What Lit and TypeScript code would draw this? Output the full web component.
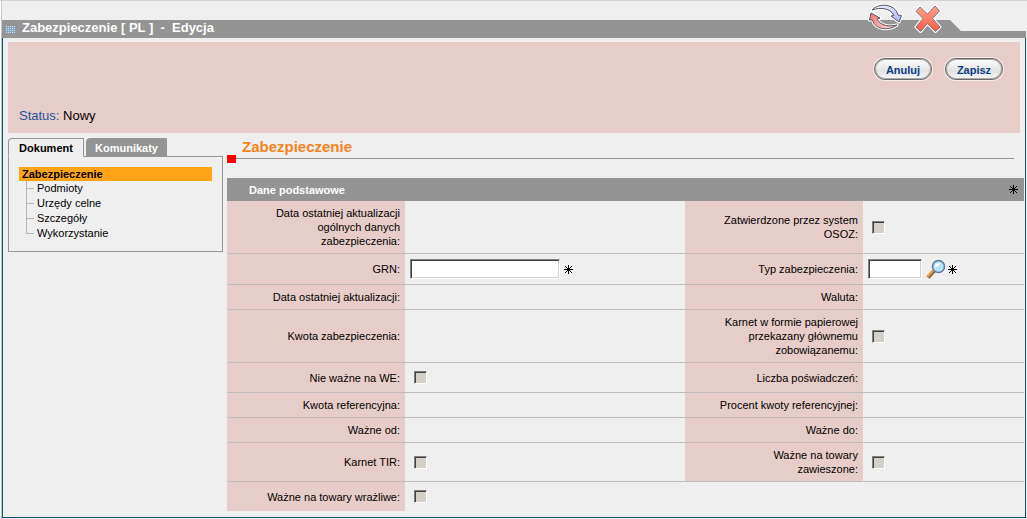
import { LitElement, html, css, svg, nothing } from "lit";
import { customElement } from "lit/decorators.js";

type Kind = "none" | "check" | "text" | "lookup";

interface Field {
  id: string;
  label: string;
  kind: Kind;
}

interface Row {
  size: string;
  left: Field;
  right?: Field;
}

const ROWS: Row[] = [
  {
    size: "h52",
    left: { id: "update-general", label: "Data ostatniej aktualizacji ogólnych danych zabezpieczenia:", kind: "none" },
    right: { id: "osoz", label: "Zatwierdzone przez system OSOZ:", kind: "check" },
  },
  {
    size: "h30",
    left: { id: "grn", label: "GRN:", kind: "text" },
    right: { id: "type", label: "Typ zabezpieczenia:", kind: "lookup" },
  },
  {
    size: "h24",
    left: { id: "update", label: "Data ostatniej aktualizacji:", kind: "none" },
    right: { id: "currency", label: "Waluta:", kind: "none" },
  },
  {
    size: "h52",
    left: { id: "amount", label: "Kwota zabezpieczenia:", kind: "none" },
    right: { id: "paper", label: "Karnet w formie papierowej przekazany głównemu zobowiązanemu:", kind: "check" },
  },
  {
    size: "h29",
    left: { id: "not-we", label: "Nie ważne na WE:", kind: "check" },
    right: { id: "certs", label: "Liczba poświadczeń:", kind: "none" },
  },
  {
    size: "h24",
    left: { id: "ref", label: "Kwota referencyjna:", kind: "none" },
    right: { id: "percent", label: "Procent kwoty referencyjnej:", kind: "none" },
  },
  {
    size: "h24",
    left: { id: "from", label: "Ważne od:", kind: "none" },
    right: { id: "to", label: "Ważne do:", kind: "none" },
  },
  {
    size: "h38",
    left: { id: "tir", label: "Karnet TIR:", kind: "check" },
    right: { id: "suspended", label: "Ważne na towary zawieszone:", kind: "check" },
  },
  {
    size: "h29",
    left: { id: "sensitive", label: "Ważne na towary wrażliwe:", kind: "check" },
  },
];

const star = html`<svg class="star" width="9" height="9" viewBox="0 0 9 9" role="img" aria-label="wymagane">
  <path d="M4.5 0V9M0 4.5H9M1 1L8 8M8 1L1 8" stroke="#000" fill="none" />
</svg>`;

const BLUE = "M5 7C11 0 28 0 31 12L34.500 12.500L32 19L24 13L27 12.500C23 5 14 4 5 7Z";
const RED = "M30 22C22 28 8 27 5.500 17L2.500 17L4 10L13 15L10 16C14 23 22 24 30 22Z";

const refreshIcon = html`<svg width="36" height="28" viewBox="0 0 36 28" aria-hidden="true">
  <defs>
    <linearGradient id="blue" x1="0" y1="0" x2="1" y2="1">
      <stop offset="0" stop-color="#f6f7ff" />
      <stop offset="1" stop-color="#a9b8f6" />
    </linearGradient>
    <linearGradient id="red" x1="0" y1="0" x2="1" y2="1">
      <stop offset="0" stop-color="#f4706c" />
      <stop offset="1" stop-color="#fbdcdc" />
    </linearGradient>
  </defs>
  <g stroke="#fff" stroke-width="3" stroke-linejoin="round" fill="#fff">
    <path d=${BLUE} />
    <path d=${RED} />
  </g>
  <g stroke="#55555f" stroke-width="1" stroke-linejoin="round">
    <path d=${BLUE} fill="url(#blue)" />
    <path d=${RED} fill="url(#red)" />
  </g>
</svg>`;

const CROSS = "M6 4L13.500 11L21 3L25.500 8L18.500 15.500L26 24L21.500 28.500L13.500 20.500L6.500 28.500L2 24L9 15.500L2 8.500Z";

const closeIcon = html`<svg width="28" height="31" viewBox="0 0 28 31" aria-hidden="true">
  <defs>
    <linearGradient id="cross" x1="0" y1="0" x2="0" y2="1">
      <stop offset="0" stop-color="#ffa592" />
      <stop offset="1" stop-color="#f85a42" />
    </linearGradient>
  </defs>
  <path d=${CROSS} stroke="#fff" stroke-width="3" stroke-linejoin="round" />
  <path d=${CROSS} fill="url(#cross)" stroke="#85706d" stroke-linejoin="round" />
</svg>`;

const lensIcon = html`<svg width="20" height="20" viewBox="0 0 20 20" aria-hidden="true">
  <path d="M2 18.500L8 12" stroke="#8a6540" stroke-width="4" />
  <path d="M1 18L7 11.500" stroke="#f0a040" stroke-width="2" />
  <circle cx="12.500" cy="7.500" r="6" fill="#b8e2fa" stroke="#5b78a0" stroke-width="1.500" />
  <path d="M9 8C9 5 11 4 14 4C13 7 12 8 9 8Z" fill="#fff" />
</svg>`;

@customElement("app-root")
export class AppRoot extends LitElement {
  static styles = css`
    :host {
      min-height: 100vh;
      box-sizing: border-box;
      padding: 0 1px 1px 2px;
      background: linear-gradient(90deg, #fff 1px, #c8c8c8 1px, #c8c8c8 2px, #efefef 2px);
      border-top: 1px solid #d4d4d4;
      font: 11px/14px "Liberation Sans", Arial, sans-serif;
      color: #000;
      display: flex;
      flex-direction: column;
    }
    button {
      font: inherit;
      cursor: pointer;
    }
    .titlebar {
      display: flex;
      align-items: flex-end;
      height: 37px;
    }
    .caption {
      flex: 1;
      display: flex;
      align-items: center;
      gap: 7px;
      height: 18px;
      padding: 0 0 0 4px;
      background: #949494;
    }
    .caption h1 {
      margin: 0;
      font-size: 13px;
      line-height: 15px;
      color: #fff;
      white-space: pre;
      padding-bottom: 3px;
    }
    .tools {
      display: flex;
      gap: 11px;
      align-self: stretch;
      align-items: flex-start;
      padding-top: 2px;
      background: linear-gradient(#efefef 19px, #949494 19px);
    }
    .tool {
      border: 0;
      padding: 0;
      background: none;
      display: block;
    }
    .tool svg {
      display: block;
    }
    .slope {
      width: 84px;
      height: 18px;
      background: #949494;
      clip-path: polygon(0 0, 8px 0, 19px 11px, 100% 11px, 100% 100%, 0 100%);
    }
    .frame {
      flex: 1;
      border: 1px solid #005566;
      border-top: 0;
      padding: 4px 1px 6px 5px;
      background: #efefef;
    }
    .status {
      display: flex;
      flex-direction: column;
      justify-content: space-between;
      box-sizing: border-box;
      min-height: 91px;
      margin-right: 4px;
      padding: 16px 17px 9px 11px;
      background: #e6cdc9;
      font-size: 13px;
      line-height: 16px;
    }
    .actions {
      display: flex;
      justify-content: flex-end;
      gap: 13px;
    }
    .pill {
      box-sizing: border-box;
      height: 22px;
      min-width: 58px;
      padding: 1px 10px 0;
      border: 1px solid #6a6a6a;
      border-radius: 11px;
      background: linear-gradient(#fff, #e2e2e2 60%, #f8f8f8);
      box-shadow: inset 0 0 0 1px #a8a8a8, 0 0 0 1px #f6eeec;
      color: #0b4084;
      font-size: 11px;
      font-weight: bold;
    }
    .status p {
      margin: 0;
    }
    .status span {
      color: #1f5299;
    }
    .body {
      display: flex;
      align-items: flex-start;
      gap: 4px;
      padding-top: 5px;
    }
    .side {
      width: 215px;
      flex: none;
    }
    .tabs {
      display: flex;
      gap: 2px;
      position: relative;
      margin-bottom: -1px;
    }
    .tab {
      box-sizing: border-box;
      height: 19px;
      min-width: 76px;
      padding: 1px 8px 0;
      border: 1px solid #949494;
      border-radius: 4px 0 0 0;
      background: #949494;
      color: #fff;
      font-weight: bold;
    }
    .tab.active {
      background: #efefef;
      border-bottom-color: #efefef;
      color: #000;
    }
    .tree {
      border: 1px solid #949494;
      padding: 10px;
    }
    .current {
      display: block;
      background: #ffa419;
      padding: 0 3px;
      font-weight: bold;
      color: #000;
      text-decoration: none;
    }
    .tree ul {
      list-style: none;
      margin: 0;
      padding: 0 0 0 7px;
    }
    .tree li {
      height: 15px;
      line-height: 15px;
      display: flex;
      background: linear-gradient(#b5b5b5, #b5b5b5) 0 0 / 1px 100% no-repeat,
        linear-gradient(#b5b5b5, #b5b5b5) 0 7px / 8px 1px no-repeat;
      padding-left: 11px;
    }
    .tree li:last-child {
      background: linear-gradient(#b5b5b5, #b5b5b5) 0 0 / 1px 8px no-repeat,
        linear-gradient(#b5b5b5, #b5b5b5) 0 7px / 8px 1px no-repeat;
    }
    .tree li a {
      color: #000;
      text-decoration: none;
    }
    .main {
      flex: 1;
      min-width: 0;
    }
    .heading {
      display: grid;
      grid-template-columns: 9px 1fr;
      margin-right: 10px;
    }
    .heading h2 {
      grid-column: 1 / -1;
      margin: 0;
      padding: 0 0 0 15px;
      font-size: 15px;
      line-height: 17px;
      color: #f58220;
    }
    .marker {
      height: 8px;
      background: #f00;
    }
    .rule {
      height: 3px;
      border-bottom: 1px solid #949494;
    }
    table {
      width: 100%;
      margin-top: 15px;
      border-spacing: 0;
      table-layout: fixed;
    }
    .c1,
    .c3 {
      width: 178px;
    }
    .c4 {
      width: 161px;
    }
    td,
    th {
      padding: 0;
    }
    thead th {
      background: #949494;
      color: #fff;
      text-align: left;
      height: 23px;
    }
    .section {
      display: flex;
      align-items: center;
      justify-content: space-between;
      padding: 0 6px 0 22px;
    }
    tbody tr + tr > * {
      border-top: 1px solid #bdbdbd;
    }
    .h24 { height: 25px; }
    .h29 { height: 30px; }
    .h30 { height: 31px; }
    .h38 { height: 39px; }
    .h52 { height: 53px; }
    tbody tr:first-child { height: 52px; }
    tbody th {
      background: #e6cdc9;
      text-align: right;
      font-weight: normal;
      padding: 0 5px 0 32px;
    }
    .value {
      display: flex;
      align-items: center;
      gap: 4px;
      padding-left: 5px;
    }
    .text {
      box-sizing: border-box;
      width: 150px;
      height: 20px;
      border: 1px solid;
      border-color: #808080 #fff #fff #808080;
      box-shadow: inset 1px 1px 0 #404040, inset -1px -1px 0 #d4d0c8;
      background: #fff;
      font: inherit;
      padding: 0 3px;
    }
    .text.short {
      width: 54px;
    }
    .check {
      appearance: none;
      box-sizing: border-box;
      width: 13px;
      height: 13px;
      margin: 0 0 0 4px;
      border: 1px solid;
      border-color: #808080 #fff #fff #808080;
      box-shadow: inset 1px 1px 0 #404040;
      background: #d4d0c8;
    }
    .lookup {
      border: 0;
      background: none;
      padding: 0;
      display: flex;
      margin-right: -2px;
    }
    .star {
      display: block;
      flex: none;
    }
  `;

  private control(f: Field) {
    switch (f.kind) {
      case "check":
        return html`<div class="value"><input class="check" id=${f.id} type="checkbox" disabled /></div>`;
      case "text":
        return html`<div class="value"><input class="text" id=${f.id} type="text" />${star}</div>`;
      case "lookup":
        return html`<div class="value">
          <input class="text short" id=${f.id} type="text" />
          <button class="lookup" type="button" aria-label="Szukaj">${lensIcon}</button>
          ${star}
        </div>`;
      default:
        return nothing;
    }
  }

  private field(f?: Field) {
    if (!f) return html`<td colspan="2"></td>`;
    const label = f.kind === "none" ? f.label : html`<label for=${f.id}>${f.label}</label>`;
    return html`<th scope="row">${label}</th><td>${this.control(f)}</td>`;
  }

  render() {
    const dots = [];
    for (let y = 0; y < 4; y++) {
      for (let x = 0; x < 5; x++) {
        dots.push(svg`<rect x=${x * 2} y=${y * 2} width="1" height="1" fill="#cfe6ff" />`);
      }
    }
    return html`
      <header class="titlebar">
        <div class="caption">
          <svg width="9" height="7" viewBox="0 0 9 7" aria-hidden="true">
            <rect width="9" height="7" fill="#86a3bf" />${dots}
          </svg>
          <h1>Zabezpieczenie [ PL ]  -  Edycja</h1>
        </div>
        <div class="tools">
          <button class="tool" type="button" aria-label="Odśwież">${refreshIcon}</button>
          <button class="tool" type="button" aria-label="Zamknij">${closeIcon}</button>
        </div>
        <div class="slope"></div>
      </header>
      <main class="frame">
        <section class="status">
          <div class="actions">
            <button class="pill" type="button">Anuluj</button>
            <button class="pill" type="button">Zapisz</button>
          </div>
          <p><span>Status:</span> Nowy</p>
        </section>
        <div class="body">
          <nav class="side">
            <div class="tabs">
              <button class="tab active" type="button">Dokument</button>
              <button class="tab" type="button">Komunikaty</button>
            </div>
            <div class="tree">
              <a class="current" href="#zabezpieczenie">Zabezpieczenie</a>
              <ul>
                <li><a href="#podmioty">Podmioty</a></li>
                <li><a href="#urzedy">Urzędy celne</a></li>
                <li><a href="#szczegoly">Szczegóły</a></li>
                <li><a href="#wykorzystanie">Wykorzystanie</a></li>
              </ul>
            </div>
          </nav>
          <section class="main">
            <div class="heading">
              <h2>Zabezpieczenie</h2>
              <div class="marker"></div>
              <div class="rule"></div>
            </div>
            <table>
              <colgroup>
                <col class="c1" />
                <col />
                <col class="c3" />
                <col class="c4" />
              </colgroup>
              <thead>
                <tr>
                  <th colspan="4"><div class="section">Dane podstawowe ${star}</div></th>
                </tr>
              </thead>
              <tbody>
                ${ROWS.map((r) => html`<tr class=${r.size}>${this.field(r.left)}${this.field(r.right)}</tr>`)}
              </tbody>
            </table>
          </section>
        </div>
      </main>
    `;
  }
}
